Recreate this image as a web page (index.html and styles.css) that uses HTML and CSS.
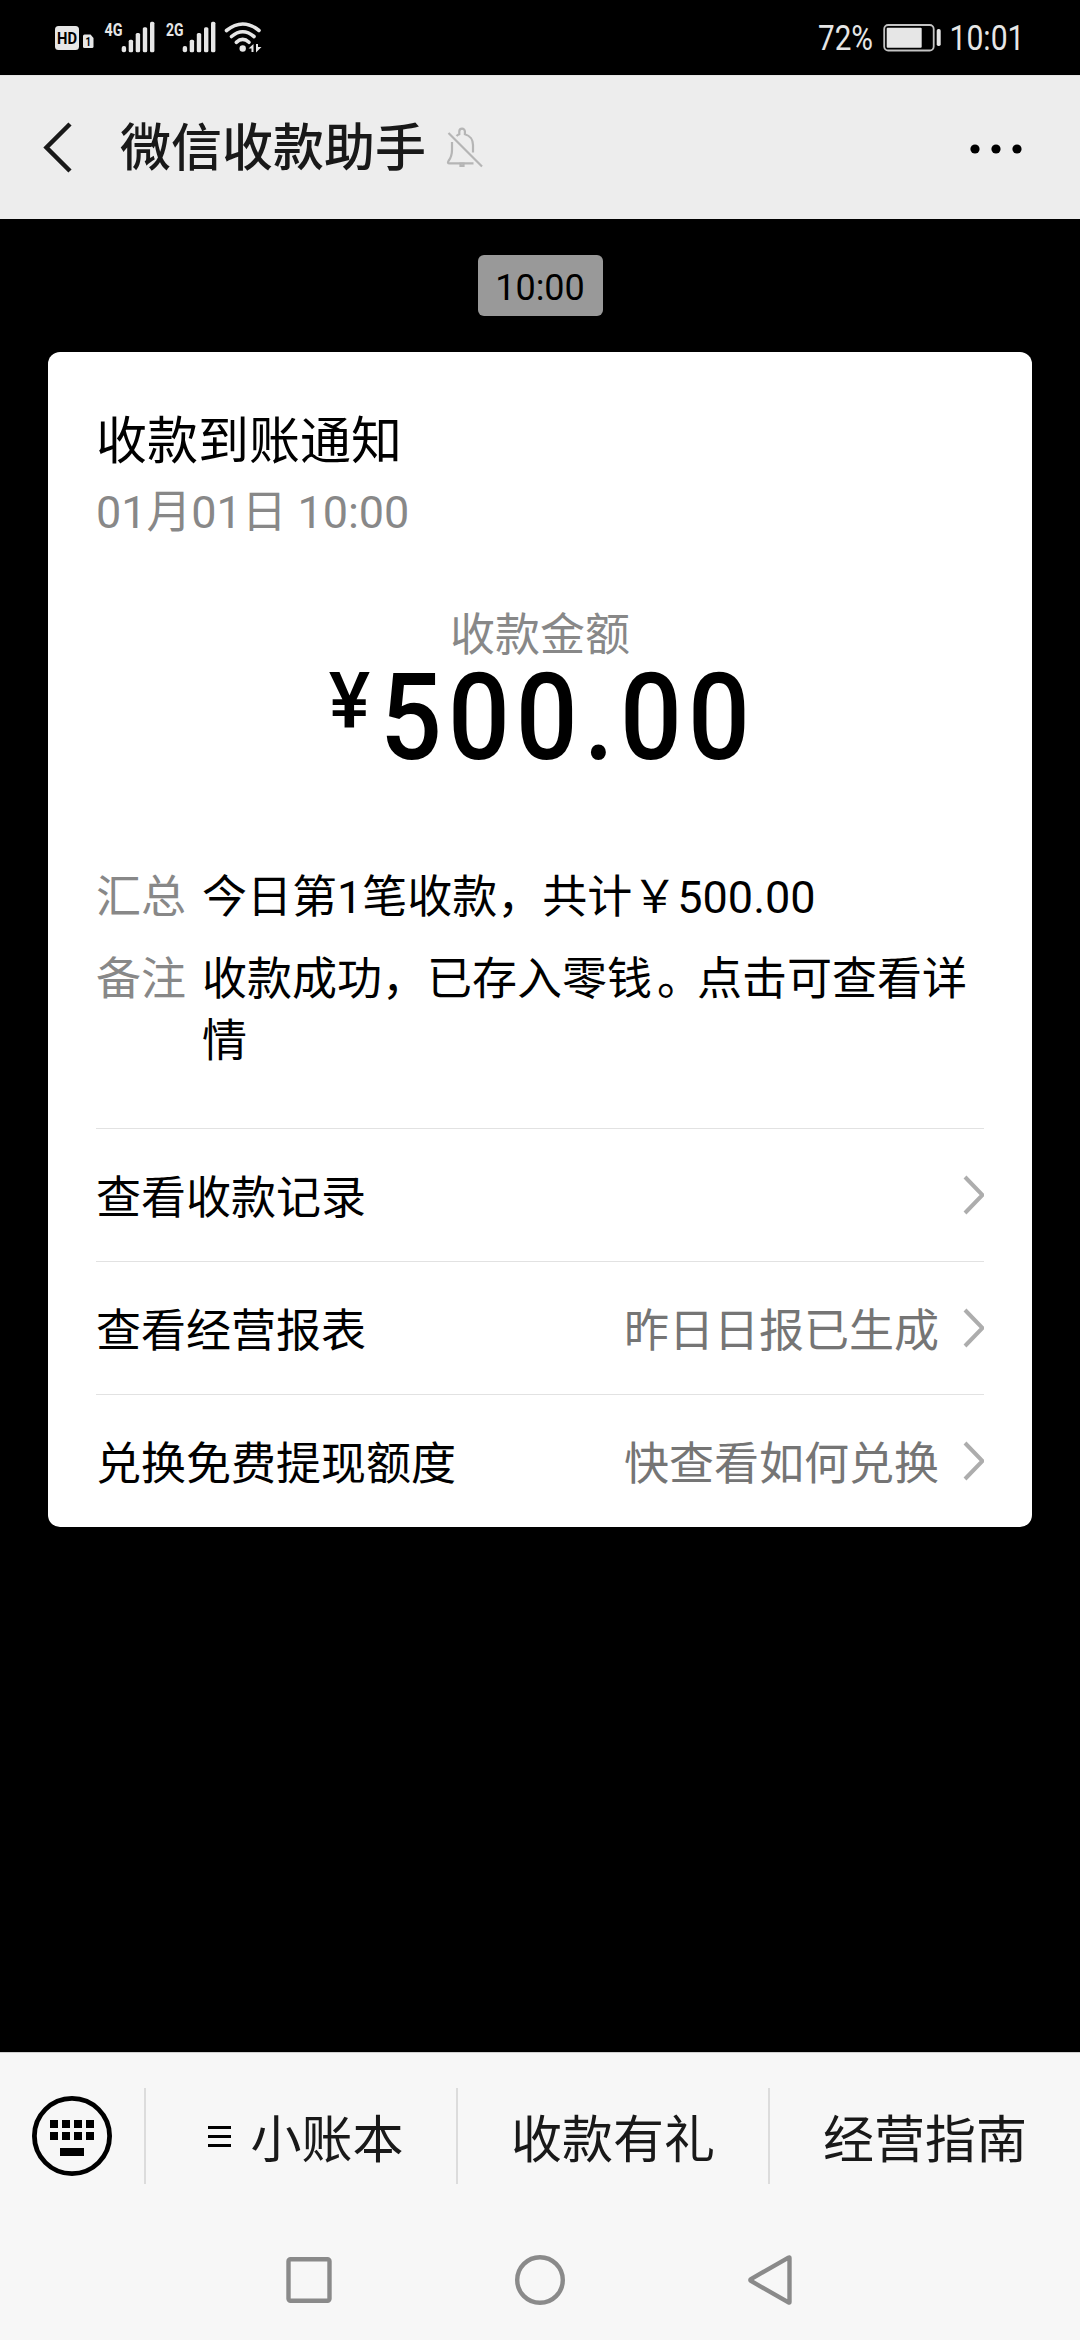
FILE: index.html
```html
<!DOCTYPE html>
<html lang="zh-CN">
<head>
<meta charset="utf-8">
<title>微信收款助手</title>
<link rel="stylesheet" href="styles.css">
</head>
<body>
<div class="screen">
  <div class="status">
    <svg class="signals" width="210" height="40" viewBox="54 18 210 40">
      <rect x="55" y="26" width="24" height="24" rx="3.500" fill="#e6e6e6"/>
      <text x="57" y="43.500" class="tag tag-dark" font-size="16" textLength="20" lengthAdjust="spacingAndGlyphs">HD</text>
      <path d="M84.500 34.500H90.500L93.500 38V46.500Q93.500 48 92 48H84.500Q83 48 83 46.500V36Q83 34.500 84.500 34.500Z" fill="#e6e6e6"/>
      <text x="85.500" y="46" class="tag tag-dark" font-size="13" textLength="5.500" lengthAdjust="spacingAndGlyphs">1</text>
      <text x="104.500" y="35.500" class="tag" font-size="19" textLength="18" lengthAdjust="spacingAndGlyphs">4G</text>
      <g fill="#e6e6e6">
        <rect x="121.700" y="46" width="4.400" height="6.300" rx="2"/>
        <rect x="128.700" y="39.700" width="4.400" height="12.600" rx="1.500"/>
        <rect x="135.700" y="33" width="4.400" height="19.300" rx="1.500"/>
        <rect x="142.800" y="27.300" width="4.400" height="25" rx="1.500"/>
        <rect x="150" y="21.700" width="4.400" height="30.600" rx="1.500"/>
      </g>
      <text x="166" y="35.500" class="tag" font-size="19" textLength="17.500" lengthAdjust="spacingAndGlyphs">2G</text>
      <g fill="#e6e6e6">
        <rect x="182.700" y="46" width="4.400" height="6.300" rx="2"/>
        <rect x="189.700" y="39.700" width="4.400" height="12.600" rx="1.500"/>
        <rect x="196.800" y="33" width="4.400" height="19.300" rx="1.500"/>
        <rect x="204" y="27.300" width="4.400" height="25" rx="1.500"/>
        <rect x="211" y="21.700" width="4.400" height="30.600" rx="1.500"/>
      </g>
      <g fill="none" stroke="#e6e6e6" stroke-width="3.600" stroke-linecap="round">
        <path d="M226.500 30.500Q242.700 17.500 259 30.500"/>
        <path d="M231.500 36.500Q242.700 27 254 36.500"/>
        <path d="M236.300 42.300Q242.700 36.500 249 42.300"/>
      </g>
      <circle cx="242.700" cy="48.500" r="3.200" fill="#e6e6e6"/>
      <path d="M248.500 48.500L253.500 44V52H251.500V48.500ZM256 44H258V47H261.500L256 52.500Z" fill="#e6e6e6"/>
    </svg>
    <svg class="power" width="206" height="40" viewBox="814 18 206 40">
      <text x="816" y="50" class="clock" textLength="55" lengthAdjust="spacingAndGlyphs">72%</text>
      <rect x="882.200" y="25" width="49.500" height="25.500" rx="4" fill="none" stroke="#c4c4c4" stroke-width="1.800"/>
      <rect x="884.700" y="27.700" width="35" height="20" rx="1" fill="#e6e6e6"/>
      <rect x="934.700" y="29" width="4" height="17" rx="1.700" fill="#e6e6e6"/>
      <text x="947.500" y="50" class="clock" textLength="75" lengthAdjust="spacingAndGlyphs">10:01</text>
    </svg>
  </div>

  <header class="topbar">
    <svg class="back" width="30" height="54" viewBox="0 0 30 54" fill="none" stroke="#191919" stroke-width="4.500"><path d="M28 3L4.500 26.500L28 50"/></svg>
    <h1 class="title">微信收款助手</h1>
    <svg class="mute" width="38" height="42" viewBox="446 126 38 42" fill="none" stroke="#b5b5b5" stroke-width="2.200">
      <path d="M452 141V149C452 154 450.800 157 448.500 160Q447 162.300 449.500 162.300H473.500M456.500 135Q458 133.600 459.300 133.200V130.500A2.800 2.800 0 0 1 464.900 130.500V133.200C470 134.500 473 139 473 144V151.500M448.500 132L482 165.500"/>
      <path d="M460.500 162.500H463.500V165H460.500Z"/>
    </svg>
    <svg class="more" width="54" height="12" viewBox="0 0 54 12"><circle cx="6" cy="6" r="4.600"/><circle cx="27" cy="6" r="4.600"/><circle cx="48" cy="6" r="4.600"/></svg>
  </header>

  <main class="chat">
    <div class="chip">10:00</div>
    <section class="card">
      <h2 class="card-title">收款到账通知</h2>
      <div class="card-date">01月01日 10:00</div>
      <div class="label">收款金额</div>
      <div class="amount"><span class="yen">¥</span><span class="sum">500.00</span></div>
      <dl class="details">
        <div class="detail"><dt>汇总</dt><dd>今日第1笔收款，共计￥500.00</dd></div>
        <div class="detail"><dt>备注</dt><dd>收款成功，已存入零钱<span class="stop">。</span>点击可查看详情</dd></div>
      </dl>
      <div class="links">
        <div class="link"><span>查看收款记录</span><svg class="chev" width="21" height="40" viewBox="0 0 21 40"><path d="M2 2L19.500 20L2 38"/></svg></div>
        <div class="link"><span>查看经营报表</span><span class="hint">昨日日报已生成</span><svg class="chev" width="21" height="40" viewBox="0 0 21 40"><path d="M2 2L19.500 20L2 38"/></svg></div>
        <div class="link"><span>兑换免费提现额度</span><span class="hint">快查看如何兑换</span><svg class="chev" width="21" height="40" viewBox="0 0 21 40"><path d="M2 2L19.500 20L2 38"/></svg></div>
      </div>
    </section>
  </main>

  <footer class="bottom">
    <div class="menu">
      <div class="keys">
        <svg width="80" height="80" viewBox="0 0 80 80">
          <circle cx="40" cy="40" r="37.600" fill="none" stroke="#000" stroke-width="4.800"/>
          <path d="M18 24h8v8h-8zM30 24h8v8h-8zM42 24h8v8h-8zM54 24h8v8h-8zM18 36h8v8h-8zM30 36h8v8h-8zM42 36h8v8h-8zM54 36h8v8h-8zM28 52h24v8H28z"/>
        </svg>
      </div>
      <div class="entry entry-list"><svg class="burger" width="23" height="23" viewBox="0 0 23 23"><path d="M0 1h23v3H0zM0 10h23v3H0zM0 19h23v3H0z"/></svg><span>小账本</span></div>
      <div class="entry"><span>收款有礼</span></div>
      <div class="entry"><span>经营指南</span></div>
    </div>
    <nav class="nav">
      <svg width="52" height="52" viewBox="0 0 52 52"><rect x="5.500" y="5.200" width="41" height="41.600" rx="2"/></svg>
      <svg width="52" height="52" viewBox="0 0 52 52"><circle cx="26" cy="26" r="22.800"/></svg>
      <svg width="52" height="52" viewBox="0 0 52 52"><path d="M44.500 3.800V48.200Q44.500 49 43.500 48.400L6 27Q4.600 26 6 25L43.500 3.600Q44.500 3 44.500 3.800Z"/></svg>
    </nav>
  </footer>
</div>
</body>
</html>
```

FILE: styles.css
```css
* { box-sizing: border-box; margin: 0; padding: 0; }
body {
  background: #000;
  color: #000;
  font-family: Roboto, "Noto Sans CJK SC", sans-serif;
  font-size: 45px;
}
svg { display: block; flex: none; }
.screen { width: 1080px; height: 2340px; display: flex; flex-direction: column; overflow: hidden; }

.status { height: 75px; padding: 18px 58px 0 54px; display: flex; justify-content: space-between; background: #000; }
.tag { font-family: Roboto, sans-serif; font-weight: 700; fill: #e6e6e6; }
.tag-dark { fill: #000; }
.clock { font-family: Roboto, sans-serif; font-size: 34.5px; fill: #e6e6e6; }
.power { overflow: visible; }

.topbar { height: 144px; padding: 0 57px 0 42px; display: flex; align-items: center; background: #ededed; border-top: 1px solid #e4e4e4; }
.title { margin-left: 48px; padding-top: 2px; font-size: 51px; line-height: 72px; font-weight: 500; color: #191919; }
.mute { margin-left: 20px; }
.more { margin-left: auto; margin-top: 2px; }

.chat { flex: 1; padding: 36px 48px 0; display: flex; flex-direction: column; align-items: center; }
.chip { width: 125px; height: 61px; padding-top: 3px; border-radius: 6px; background: #999; font-size: 36px; line-height: 61px; text-align: center; }
.card { width: 984px; margin-top: 36px; padding: 54px 48px 0; border-radius: 12px; background: #fff; }
.card-title { font-size: 51px; line-height: 72px; font-weight: 400; }
.card-date { margin-top: 3px; line-height: 64px; color: #888; letter-spacing: -0.1px; }
.label { margin-top: 59px; line-height: 64px; text-align: center; color: #888; }
.amount { height: 100px; padding-left: 4px; display: flex; justify-content: center; font-weight: 500; }
.yen { font-size: 78px; line-height: 66px; margin-right: 10px; }
.sum { width: 375px; font-size: 121px; line-height: 100px; letter-spacing: 6.7px; transform: scaleX(0.9); transform-origin: left; }
.details { margin-top: 99px; display: flex; flex-direction: column; gap: 20px; line-height: 62px; }
.detail { display: flex; gap: 16px; }
.detail dt { flex: none; width: 90px; color: #888; }
.stop { padding-left: 5px; margin-right: -5px; }
.links { margin-top: 55px; }
.link { height: 133px; display: flex; align-items: center; border-top: 1px solid #e2e2e2; line-height: 64px; }
.link span { padding-top: 8px; }
.link .hint { margin-left: auto; color: #757575; }
.chev { margin-left: 24px; fill: none; stroke: #adadad; stroke-width: 4px; }
.link span:first-child + .chev { margin-left: auto; }

.bottom { height: 288px; background: #f7f7f7; border-top: 1px solid #cfcfcf; }
.menu { height: 166px; display: flex; align-items: center; }
.keys { width: 144px; padding-left: 32px; }
.entry { width: 312px; height: 96px; display: flex; align-items: center; justify-content: center; gap: 19px; border-left: 2px solid #dcdcdc; font-size: 51px; line-height: 72px; color: #191919; }
.entry-list { padding-left: 10px; }
.entry span { padding-top: 9px; }
.nav { height: 121px; display: flex; justify-content: center; gap: 179px; align-items: center; fill: none; stroke: #8a8a8a; stroke-width: 4.4px; }
```
